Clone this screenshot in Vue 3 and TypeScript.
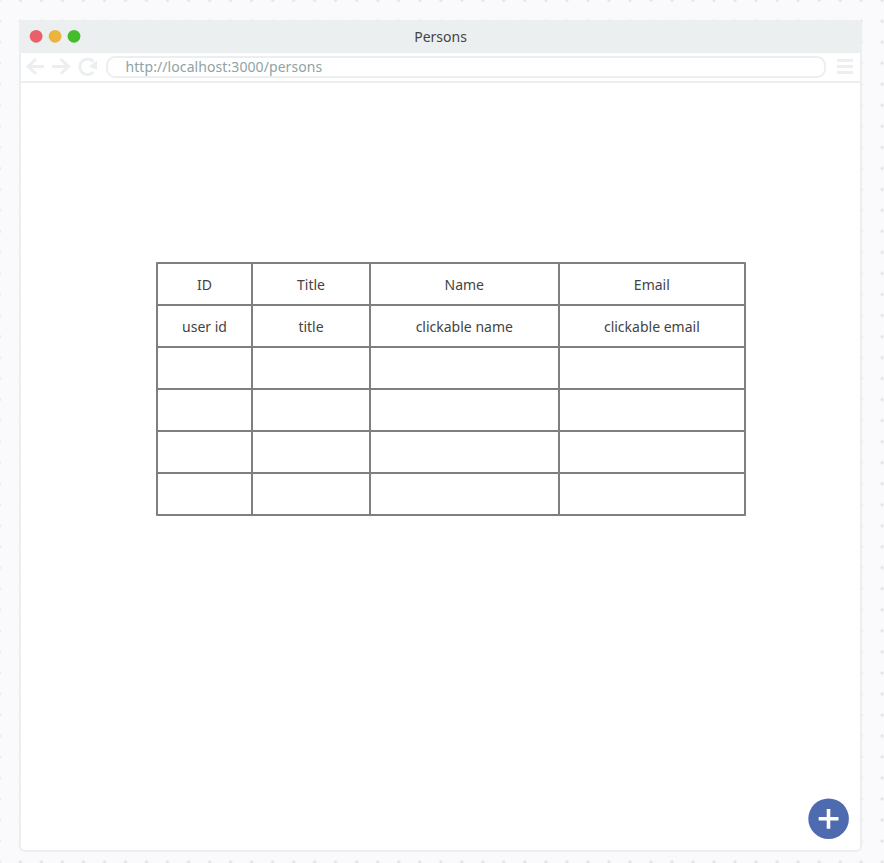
<script setup lang="ts">
const rows: string[][] = [
  ['ID', 'Title', 'Name', 'Email'],
  ['user id', 'title', 'clickable name', 'clickable email'],
  ...Array.from({ length: 4 }, () => ['', '', '', '']),
]
</script>

<template>
  <div class="canvas">
    <svg class="dots" width="884" height="863" aria-hidden="true">
      <defs>
        <pattern id="dot-grid" x="9.9" y="-10.3" width="21.02" height="21.02" patternUnits="userSpaceOnUse">
          <circle cx="10.5" cy="10.5" r="1.6" fill="#e2e3e5" />
        </pattern>
      </defs>
      <rect width="884" height="863" fill="url(#dot-grid)" />
    </svg>
    <section class="window">
      <header class="titlebar">
        <svg class="lights" width="60" height="20" viewBox="0 0 60 20">
          <circle cx="10.1" cy="10.3" r="6.4" fill="#e95f6b" />
          <circle cx="29.1" cy="10.3" r="6.4" fill="#ebb43f" />
          <circle cx="48" cy="10.3" r="6.4" fill="#43bd2d" />
        </svg>
        <span class="title">Persons</span>
      </header>
      <nav class="toolbar">
        <svg class="navicons" width="85" height="29" viewBox="21 52 85 29" fill="none" stroke="#ebeff0" stroke-width="3">
          <path d="M44 66.5H28.5M36 59L28.2 66.5L36 74" />
          <path d="M52 66.5H67.5M60.7 59L68.5 66.5L60.7 74" />
          <path d="M93.4 72A7.8 7.8 0 1 1 93.4 61.7" />
          <path d="M97 60.8V69.8L88.6 66.5Z" fill="#ebeff0" stroke="none" />
        </svg>
        <div class="address">http://localhost:3000/persons</div>
        <div class="menu"><i /><i /><i /></div>
      </nav>
      <main class="page">
        <div class="table">
          <template v-for="(row, r) in rows" :key="r">
            <div v-for="(cell, c) in row" :key="c" class="cell">{{ cell }}</div>
          </template>
        </div>
        <button class="fab" aria-label="Add">
          <svg width="41" height="41" viewBox="0 0 41 41">
            <circle cx="20.6" cy="20.7" r="20.3" fill="#4f6bb0" />
            <path d="M10.7 20.8H30.5M20.5 10.9V30.7" stroke="#fff" stroke-width="3.6" />
          </svg>
        </button>
      </main>
    </section>
  </div>
</template>

<style>
body {
  margin: 0;
}
</style>

<style scoped>
.canvas {
  position: relative;
  box-sizing: border-box;
  width: 884px;
  height: 863px;
  padding: 20px 22px 11px 19px;
  overflow: hidden;
  background: #fafafc;
  font-family: 'Noto Sans', sans-serif;
  font-size: 14px;
  color: #444;
}
.dots {
  position: absolute;
  inset: 0;
}
.window {
  position: relative;
  box-sizing: border-box;
  display: flex;
  flex-direction: column;
  width: 843px;
  height: 832px;
  border: 2px solid #ebeff0;
  border-top: 0;
  border-radius: 3px 3px 6px 6px;
  background: #fff;
  overflow: hidden;
}
.titlebar {
  display: grid;
  grid-template-columns: 60px 1fr 60px;
  align-items: center;
  height: 32.5px;
  padding: 0 5px;
  background: #ebeff0;
}
.title {
  text-align: center;
  line-height: 20px;
  padding-top: 1px;
}
.toolbar {
  box-sizing: border-box;
  display: flex;
  align-items: center;
  height: 30.5px;
  border-bottom: 2px solid #ebeff0;
}
.navicons {
  flex: none;
}
.address {
  box-sizing: border-box;
  width: 720px;
  height: 22px;
  padding-left: 17.5px;
  border: 2px solid #ebeff0;
  border-radius: 9px;
  line-height: 17px;
  letter-spacing: 0.08px;
  color: #8fa3a4;
}
.menu {
  display: grid;
  gap: 3px;
  width: 16px;
  margin-left: 11px;
}
.menu i {
  height: 3px;
  background: #ebeff0;
}
.page {
  flex: 1;
  display: flex;
  flex-direction: column;
  justify-content: space-between;
  padding: 179px 11px 11px 135px;
}
.table {
  display: grid;
  grid-template-columns: 93px 116px 186.5px 184.7px;
  grid-auto-rows: 40px;
  gap: 2px;
  padding: 2px;
  width: max-content;
  border-radius: 1px;
  background: #7f7f7f;
}
.cell {
  box-sizing: border-box;
  display: flex;
  align-items: center;
  justify-content: center;
  background: #fff;
  padding-top: 1px;
  height: 40px;
}
.fab {
  align-self: flex-end;
  width: 41px;
  height: 41px;
  padding: 0;
  border: 0;
  background: none;
}
.fab svg {
  display: block;
}
</style>
